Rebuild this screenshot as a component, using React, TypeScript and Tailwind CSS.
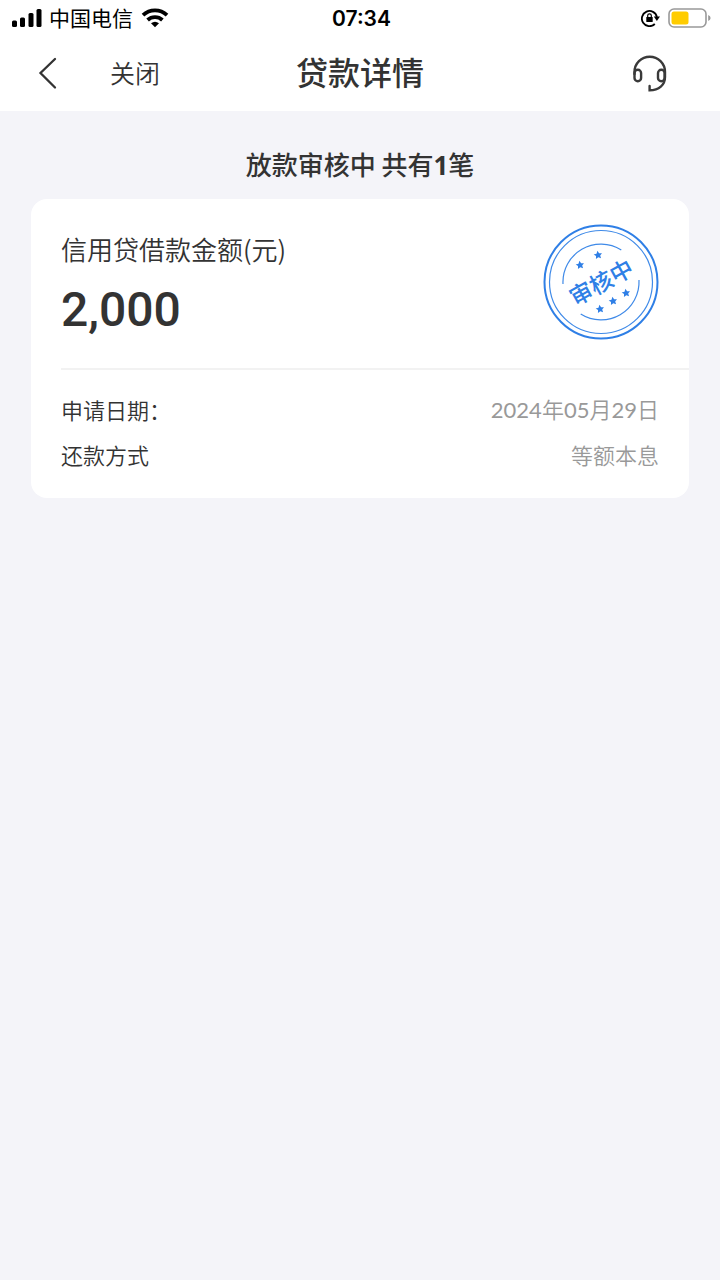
import type { ReactNode } from 'react'

interface DetailItem {
  label: string
  value: string
}

const details: DetailItem[] = [
  { label: '申请日期：', value: '2024年05月29日' },
  { label: '还款方式', value: '等额本息' },
]

export default function App() {
  return (
    <div className="min-h-screen bg-[#f4f4f9] text-[#333333] font-['Noto_Sans_CJK_SC',sans-serif]">
      <div className="bg-white">
        <StatusBar />
        <NavBar title="贷款详情" />
      </div>

      <main className="px-[31px] pt-[33px]">
        <h2 className="h-10 text-center text-[26px] leading-10 font-medium">
          放款审核中 共有<span className="font-['Noto_Sans'] font-bold">1</span>笔
        </h2>
        <LoanCard />
      </main>
    </div>
  )
}

function StatusBar() {
  return (
    <div className="grid h-9 grid-cols-3 items-center pl-3 pr-[9px] text-black">
      <div className="flex items-center">
        <SignalIcon />
        <span className="ml-[7px] pb-0.5 text-[21px] leading-7">中国电信</span>
        <WifiIcon />
      </div>
      <div className="pt-0.5 text-center font-['Inter'] text-[21px] leading-7 font-semibold">07:34</div>
      <div className="flex items-center justify-end gap-2">
        <RotationLockIcon />
        <BatteryIcon />
      </div>
    </div>
  )
}

function NavBar({ title }: { title: string }) {
  return (
    <header className="grid h-[75px] grid-cols-[1fr_auto_1fr] items-center px-[30px]">
      <div className="flex items-center">
        <button type="button" aria-label="返回" className="flex items-center justify-center pb-0.5">
          <svg width="36" height="36" viewBox="0 0 36 36" fill="none" stroke="#333333" strokeWidth="2.3">
            <path d="M25 4 10.500 18 25 32.500" strokeLinecap="round" strokeLinejoin="miter" />
          </svg>
        </button>
        <button type="button" className="ml-11 pb-1 text-[25px] leading-9 font-[350]">关闭</button>
      </div>
      <h1 className="pb-1.5 text-[32px] leading-10 font-medium">{title}</h1>
      <div className="flex justify-end pr-5">
        <button type="button" aria-label="客服">
          <HeadsetIcon />
        </button>
      </div>
    </header>
  )
}

function LoanCard() {
  return (
    <section className="mt-[15px] rounded-2xl bg-white">
      <div className="ml-[30px] flex justify-between border-b-2 border-[#f2f2f2] pt-[25px] pr-[30px] pb-[27px]">
        <div className="pt-[3px]">
          <div className="text-[26px] leading-11 font-[350]">信用贷借款金额(元)</div>
          <Amount>2,000</Amount>
        </div>
        <ReviewStamp />
      </div>

      <dl className="px-[30px] pt-4 pb-[22px]">
        {details.map((d) => (
          <div key={d.label} className="flex h-[45px] items-center justify-between text-[22px] leading-8 font-[350]">
            <dt>{d.label}</dt>
            <dd className="text-[#999999]">
              <DetailValue value={d.value} />
            </dd>
          </div>
        ))}
      </dl>
    </section>
  )
}

// Digits are set in a Latin face, the characters between them stay in the CJK one
function DetailValue({ value }: { value: string }) {
  return value.split(/(\d+)/).map((part, i) =>
    /\d/.test(part) ? <span key={i} className="font-['Lato'] font-normal">{part}</span> : part,
  )
}

function Amount({ children }: { children: ReactNode }) {
  return <div className="mt-2 font-['Roboto'] text-[48px] leading-[62px] font-medium">{children}</div>
}

function Star({ x, y }: { x: number; y: number }) {
  return (
    <path
      transform={`translate(${x} ${y}) rotate(-8)`}
      d="M0-4.200 1.300-1.500 4.200-1.200 2.100.8 2.600 3.700 0 2.300-2.600 3.700-2.100.8-4.200-1.200-1.300-1.500Z"
      fill="#2f7fe6"
    />
  )
}

function ReviewStamp() {
  return (
    <svg width="116" height="116" viewBox="0 0 116 116" fill="none" stroke="#3f8ae8" role="img" aria-label="审核中">
      <circle cx="58" cy="58" r="56.500" strokeWidth="2" stroke="#2f7fe6" />
      <circle cx="58" cy="58" r="51.500" strokeWidth="1.200" />
      <path d="M20 60A38 38 0 0 1 78.300 26" strokeWidth="1.200" />
      <path d="M37.700 90A38 38 0 0 0 96 56" strokeWidth="1.200" />
      <g stroke="none">
        <Star x={37} y={41} />
        <Star x={55} y={31} />
        <Star x={57} y={85} />
        <Star x={70} y={77} />
        <Star x={83} y={69} />
        <text
          x="58"
          y="67"
          transform="rotate(-29 58 58)"
          textAnchor="middle"
          fontSize="23"
          fontWeight="500"
          fill="#2f7fe6"
        >
          审核中
        </text>
      </g>
    </svg>
  )
}

function SignalIcon() {
  return (
    <svg width="30" height="20" viewBox="0 0 30 20" fill="black">
      <rect x="0" y="12.500" width="5" height="6.500" rx="1.500" />
      <rect x="8" y="9.500" width="5" height="9.500" rx="1.500" />
      <rect x="16.500" y="5" width="5" height="14" rx="1.500" />
      <rect x="24.500" y="1" width="5" height="18" rx="1.500" />
    </svg>
  )
}

function WifiIcon() {
  return (
    <svg className="ml-2" width="28" height="20" viewBox="0 0 28 20" fill="none" stroke="black" strokeWidth="3.800">
      <path d="M2 7.200A17.500 17.500 0 0 1 26 7.200" />
      <path d="M6.600 12A10.800 10.800 0 0 1 21.400 12" />
      <path d="M14 19.200 10 15.200Q14 12.200 18 15.200Z" fill="black" stroke="none" />
    </svg>
  )
}

function RotationLockIcon() {
  return (
    <svg width="19" height="18" viewBox="0 0 19 18" fill="none" stroke="black" strokeWidth="1.800">
      <path d="M13.800 15A7.600 7.600 0 1 1 15.900 8" />
      <path d="M12.800 7.600H19L15.900 12Z" fill="black" stroke="none" />
      <rect x="5.300" y="8" width="6.400" height="5" rx=".6" fill="black" stroke="none" />
      <path d="M6.700 8.500V6.600a1.800 1.800 0 0 1 3.600 0V8.500" strokeWidth="1.200" />
    </svg>
  )
}

function BatteryIcon() {
  return (
    <svg width="43" height="20" viewBox="0 0 43 20" fill="none">
      <rect x="1" y="1" width="37" height="18" rx="5" stroke="#999999" strokeWidth="1.600" />
      <rect x="3.500" y="3.500" width="17" height="13" rx="2.500" fill="#ffcc00" />
      <path d="M40.200 7Q42.600 8 42.600 10T40.200 13Z" fill="#999999" />
    </svg>
  )
}

function HeadsetIcon() {
  return (
    <svg width="40" height="40" viewBox="0 0 40 40" fill="none" stroke="#3a3a3a" strokeWidth="2.400" strokeLinecap="round">
      <path d="M4.500 20V18A15.200 15.200 0 0 1 35 18V23C35 31 29 36.300 19.600 36.300V32" />
      <rect x="4.500" y="15.800" width="6.600" height="11.400" rx="3.200" />
      <rect x="28" y="15.800" width="6.600" height="11.400" rx="3.200" />
    </svg>
  )
}
